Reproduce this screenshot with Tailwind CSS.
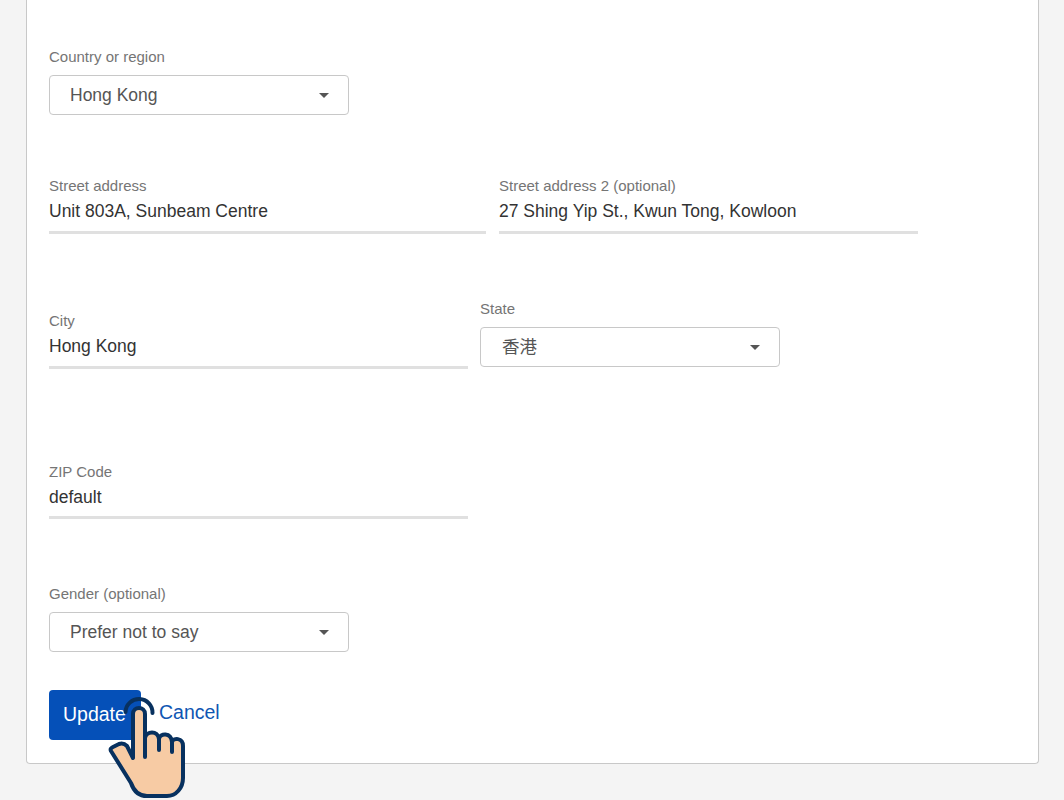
<!DOCTYPE html>
<html lang="en">
  <head>
    <meta charset="UTF-8" />
    <title>Edit address</title>
    <script src="https://cdn.jsdelivr.net/npm/@tailwindcss/browser@4"></script>
  </head>
  <body class="bg-[#f4f4f4] font-['Liberation_Sans','Noto_Sans_CJK_TC',sans-serif]">
    <div class="relative h-[800px] w-[1064px] overflow-hidden">
      <!-- Card -->
      <div class="ml-[26px] h-[764px] w-[1013px] rounded-b border border-t-0 border-[#c8c8c8] bg-white pl-[22px]">
        <!-- Country -->
        <div class="pt-[48px]">
          <label class="block h-[27px] text-[15px] leading-[18px] text-[#757575]">Country or region</label>
          <div class="flex h-10 w-[300px] items-center justify-between rounded border border-[#c8c8c8] pl-5 pr-[19px] text-[17.5px] text-[#555]">
            <span>Hong Kong</span>
            <span class="h-0 w-0 border-x-[5px] border-t-[5px] border-x-transparent border-t-[#555]"></span>
          </div>
        </div>

        <!-- Street -->
        <div class="mt-[62px] flex gap-[13px]">
          <div class="w-[437px]">
            <label class="block h-[18px] text-[15px] leading-[18px] text-[#757575]">Street address</label>
            <div class="h-[39px] border-b-[3px] border-[#e0e0e0] pt-[3px] text-[17.5px] leading-[26px] text-[#333]">Unit 803A, Sunbeam Centre</div>
          </div>
          <div class="w-[419px]">
            <label class="block h-[18px] text-[15px] leading-[18px] text-[#757575]">Street address 2 (optional)</label>
            <div class="h-[39px] border-b-[3px] border-[#e0e0e0] pt-[3px] text-[17.5px] leading-[26px] text-[#333]">27 Shing Yip St., Kwun Tong, Kowloon</div>
          </div>
        </div>

        <!-- City and state -->
        <div class="mt-[66px] flex items-start gap-3">
          <div class="mt-3 w-[419px]">
            <label class="block h-[18px] text-[15px] leading-[18px] text-[#757575]">City</label>
            <div class="h-[39px] border-b-[3px] border-[#e0e0e0] pt-[3px] text-[17.5px] leading-[26px] text-[#333]">Hong Kong</div>
          </div>
          <div>
            <label class="block h-[27px] text-[15px] leading-[18px] text-[#757575]">State</label>
            <div class="flex h-10 w-[300px] items-center justify-between rounded border border-[#c8c8c8] pl-5 pr-[19px] text-[17.5px] text-[#555]">
              <span class="pl-px">香港</span>
              <span class="h-0 w-0 border-x-[5px] border-t-[5px] border-x-transparent border-t-[#555]"></span>
            </div>
          </div>
        </div>

        <!-- ZIP -->
        <div class="mt-[94px] w-[419px]">
          <label class="block h-[18px] text-[15px] leading-[18px] text-[#757575]">ZIP Code</label>
          <div class="h-[38px] border-b-[3px] border-[#e0e0e0] pt-[3px] text-[17.5px] leading-[26px] text-[#333]">default</div>
        </div>

        <!-- Gender -->
        <div class="mt-[66px]">
          <label class="block h-[27px] text-[15px] leading-[18px] text-[#757575]">Gender (optional)</label>
          <div class="flex h-10 w-[300px] items-center justify-between rounded border border-[#c8c8c8] pl-5 pr-[19px] text-[17.5px] text-[#555]">
            <span>Prefer not to say</span>
            <span class="h-0 w-0 border-x-[5px] border-t-[5px] border-x-transparent border-t-[#555]"></span>
          </div>
        </div>

        <!-- Actions -->
        <div class="mt-[38px] flex items-center gap-[18px]">
          <button class="h-[50px] w-[92px] rounded bg-[#0550b8] pl-[14px] text-left text-[19.5px] text-white">Update</button>
          <a href="#" class="-mt-[5px] text-[19.5px] text-[#0f56b3]">Cancel</a>
        </div>
      </div>

      <!-- Pointer hand -->
      <svg class="absolute left-[100px] top-[695px]" width="90" height="105" viewBox="100 695 90 105" fill="none" stroke="#08315f" stroke-width="4" stroke-linejoin="round" stroke-linecap="round">
        <path d="M125.500 712a13.500 13.500 0 0 1 27 1" />
        <path fill="#f7cba4" d="M133 758V714c0-8 12-8 12 0v24c1-7 13-8 14 1 1-6 12-7 13 3 1-4 11-5 11 4v32c0 10-7 18-16 18h-20c-8 0-13-4-16-13l-20-32c-1-2 0-3 2-4l6-3c3-1 6 0 8 2z" />
        <path d="M145 737v20M159 739v11M172 742v10" />
      </svg>
    </div>
  </body>
</html>
